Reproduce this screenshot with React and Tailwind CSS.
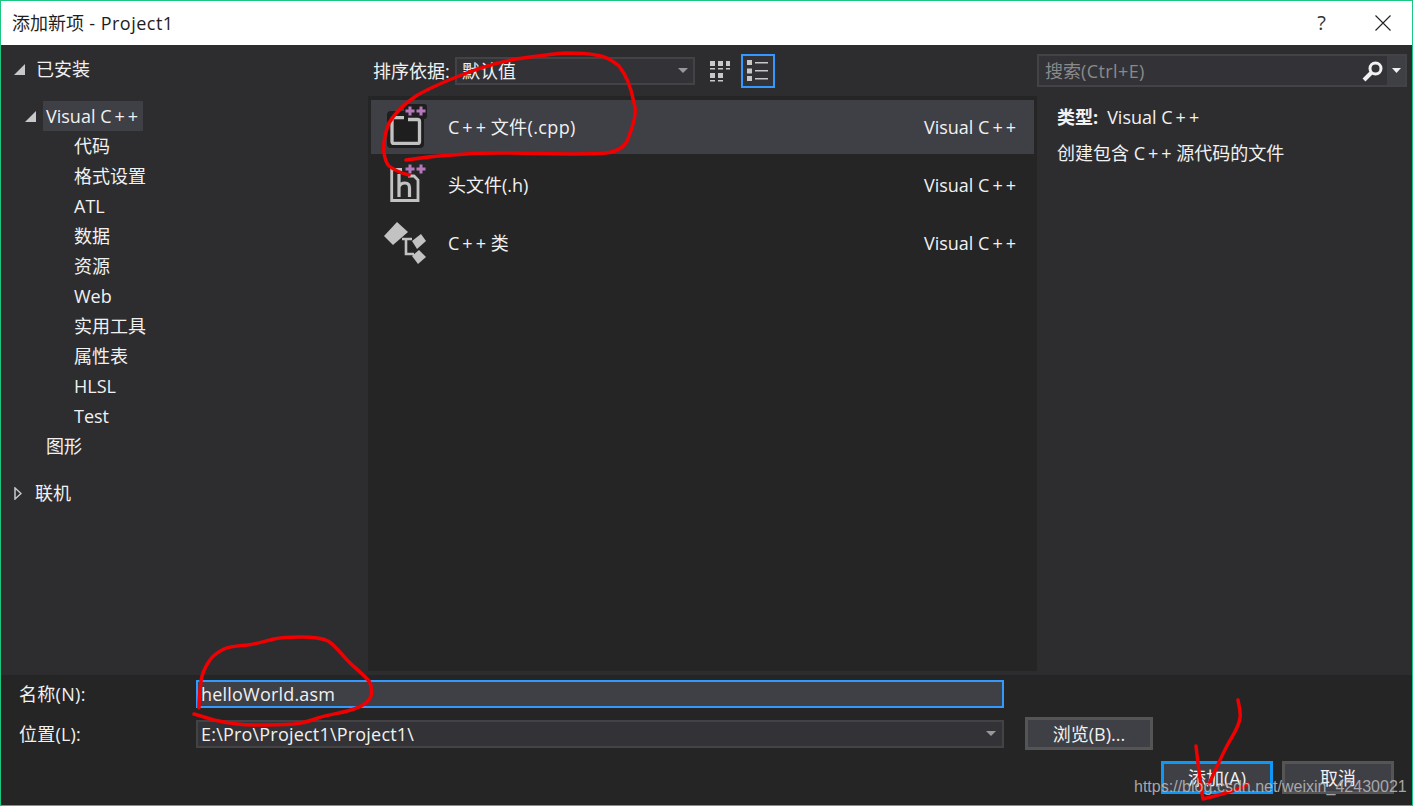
import React from "react";

const FONT = "font-['Open_Sans','Noto_Sans_CJK_SC',sans-serif]";

const TREE_CHILDREN = ["代码", "格式设置", "ATL", "数据", "资源", "Web", "实用工具", "属性表", "HLSL", "Test"];

const Cpp = () => (
  <>
    <span className="tracking-[3px]">C+</span>+
  </>
);

const TEMPLATES = [
  { name: "文件(.cpp)", prefix: true, icon: "cpp", selected: true },
  { name: "头文件(.h)", icon: "header" },
  { name: "类", prefix: true, icon: "class" },
];

const Plus = ({ x, y }) => (
  <path d={`M${x - 1.5} ${y - 4.5}h3v3h3v3h-3v3h-3v-3h-3v-3h3z`} fill="#b579bb" />
);

const CppIcon = () => (
  <svg width="48" height="48" viewBox="0 0 48 48">
    <rect x="0" y="8" width="37" height="37" rx="4" fill="#1e1e1e" />
    <rect x="17" y="1" width="23" height="15" rx="3" fill="#1e1e1e" />
    <path d="M17 14.600H7a2 2 0 0 0-2 2V38.400a2 2 0 0 0 2 2H30.500a2 2 0 0 0 2-2V18.500a2 2 0 0 0-2-2H21" fill="none" stroke="#c2c2c2" strokeWidth="3.300" />
    <Plus x={23} y={8} />
    <Plus x={34} y={8} />
  </svg>
);

const HeaderIcon = () => (
  <svg width="48" height="48" viewBox="0 0 48 48">
    <path d="M15 8.500H4.700V39.500H31V19l-4-4h-6" fill="none" stroke="#c2c2c2" strokeWidth="2.800" />
    <path d="M12 13v23M12 26c1-3 4-4 6-4 3 0 4.500 2 4.500 5v9" fill="none" stroke="#c2c2c2" strokeWidth="3.200" />
    <Plus x={23} y={8} />
    <Plus x={34} y={8} />
  </svg>
);

const ClassIcon = () => (
  <svg width="48" height="48" viewBox="0 0 48 48" className="-ml-[5px]">
    <path d="M2 17L15 3l11 10-15 13z" fill="#c2c2c2" />
    <path d="M30 22l9-7 5 7-9 8z" fill="#c2c2c2" />
    <path d="M30 37l7-6 7 7-8 7z" fill="#c2c2c2" />
    <path d="M20 20h10M24 20v15h8" fill="none" stroke="#c2c2c2" strokeWidth="2.600" />
  </svg>
);

const ICONS = { cpp: CppIcon, header: HeaderIcon, class: ClassIcon };

const Triangle = () => (
  <svg width="11" height="11" viewBox="0 0 11 11">
    <path d="M0 11L11 0v11z" fill="#c8c8c8" />
  </svg>
);

const Caret = () => (
  <svg width="10" height="5" viewBox="0 0 10 5">
    <path d="M0 0h10L5 5z" fill="#999999" />
  </svg>
);

const Button = ({ children, className }) => (
  <div className={`flex items-center justify-center bg-[#3f3f46] border-[3px] text-[18px] text-[#f1f1f1] ${className}`}>
    {children}
  </div>
);

// hand drawn red marks on top of the dialog
const Annotations = () => (
  <svg className="absolute inset-0 pointer-events-none" width="1413" height="806" viewBox="0 0 1413 806" fill="none">
    <path
      d="M405 159C425 156 445 154 465 153C510 150 570 155 605 152C620 150 626 143 628 135C634 120 636 110 633 102C630 85 626 75 618 65C610 58 603 55 595 54C585 52 575 52 565 52C550 53 530 56 515 58C495 62 475 68 458 75C443 81 428 87 415 95C403 103 394 112 388 122C384 132 382 142 383 152C384 158 385 162 388 165C393 169 400 172 408 174"
      stroke="#f00000"
      strokeWidth="3.500"
      strokeLinecap="round"
    />
    <path
      d="M193 713C200 715 206 717 213 719C226 722 240 724 253 724C267 724 280 724 293 723C302 722 309 720 317 717C329 713 342 712 353 708C362 705 368 701 370 695C371 690 371 685 368 680C362 673 354 667 347 660C340 653 335 645 327 640C319 636 309 636 300 636C291 636 282 636 273 638C264 640 256 643 247 644C238 645 230 645 223 648C215 652 210 656 207 662C203 668 201 674 200 680C199 689 198 698 198 707"
      stroke="#f00000"
      strokeWidth="3.500"
      strokeLinecap="round"
    />
    <path
      d="M1237 699C1238 705 1240 711 1239 717C1238 726 1232 734 1227 743C1220 756 1214 770 1208 783"
      stroke="#f00000"
      strokeWidth="3.500"
      strokeLinecap="round"
    />
    <path d="M1195 745C1197 762 1199 780 1202 798C1217 794 1234 791 1247 783" stroke="#f00000" strokeWidth="3.500" strokeLinecap="round" strokeLinejoin="round" />
  </svg>
);

export default function App() {
  return (
    <div className={`relative w-[1413px] h-[806px] overflow-hidden flex flex-col border border-[#1bc77e] bg-[#2d2d30] leading-none ${FONT}`}>
      {/* Title bar */}
      <div className="h-[44px] shrink-0 bg-white flex items-center justify-between pl-[11px] pr-[21px] text-[18px] text-[#1e1e1e]">
        <span>
          添加新项<span className="tracking-[0.5px]"> - Project1</span>
        </span>
        <div className="flex items-center gap-[49px]">
          <span className="text-[20px] text-[#333333]">?</span>
          <svg width="16" height="16" viewBox="0 0 16 16">
            <path d="M.5.5l15 15M15.500.5l-15 15" stroke="#222222" strokeWidth="1.100" fill="none" />
          </svg>
        </div>
      </div>

      {/* Main */}
      <div className="h-[630px] shrink-0 flex">
        {/* Tree */}
        <div className="w-[367px] shrink-0 text-[18px] text-[#f1f1f1]">
          <div className="h-[30px] mt-[9px] flex items-center pl-[13px]">
            <Triangle />
            <span className="ml-[11px]">已安装</span>
          </div>
          <div className="h-[30px] mt-[17px] flex items-center pl-[24px]">
            <Triangle />
            <span className="ml-[7px] h-[30px] px-[3px] w-[100px] flex items-center bg-[#3f3f46]">
              <span>
                Visual <Cpp />
              </span>
            </span>
          </div>
          {TREE_CHILDREN.map(item => (
            <div key={item} className="h-[30px] flex items-center pl-[73px]">{item}</div>
          ))}
          <div className="h-[30px] flex items-center pl-[45px]">图形</div>
          <div className="h-[30px] mt-[17px] flex items-center pl-[13px]">
            <svg width="8" height="13" viewBox="0 0 8 13">
              <path d="M1 1l6 5.500L1 12z" fill="none" stroke="#c8c8c8" strokeWidth="1.500" />
            </svg>
            <span className="ml-[13px]">联机</span>
          </div>
        </div>

        {/* Templates */}
        <div className="w-[669px] shrink-0 flex flex-col">
          <div className="h-[51px] shrink-0 flex items-center text-[18px] text-[#f1f1f1] pl-[5px]">
            <span className="w-[82px]">排序依据:</span>
            <div className="w-[240px] h-[28px] flex items-center justify-between px-[5px] bg-[#333337] border-2 border-[#434346]">
              <span>默认值</span>
              <Caret />
            </div>
            <svg width="22" height="22" viewBox="0 0 22 22" fill="#c8c8c8" className="ml-[14px]">
              <path d="M1 1h5v5H1zM9 1h5v5H9zM17 1h4v5h-4zM1 8h5v1.500H1zM9 8h5v1.500H9zM17 8h4v1.500h-4zM1 13h5v5H1zM9 13h5v5H9zM1 20h5v1.500H1zM9 20h5v1.500H9z" />
            </svg>
            <div className="ml-[10px] w-[34px] h-[34px] flex items-center justify-center bg-[#333337] border-2 border-[#3399ff]">
              <svg width="22" height="22" viewBox="0 0 22 22" fill="#c8c8c8">
                <path d="M0 0h5v5H0zM8 2h13v1.500H8zM0 8.500h5v5H0zM8 10h13v1.500H8zM0 16h5v5H0zM8 18h13v1.500H8z" />
              </svg>
            </div>
          </div>
          <div className="h-[575px] shrink-0 flex flex-col gap-[4px] bg-[#252526] py-[4px] px-[3px] text-[18px] text-[#f1f1f1]">
            {TEMPLATES.map(t => {
              const Icon = ICONS[t.icon];
              return (
                <div key={t.name} className={`h-[54px] flex items-center pl-[16px] pr-[18px] ${t.selected ? "bg-[#3f3f46]" : ""}`}>
                  <div className="w-[61px] flex">
                    <Icon />
                  </div>
                  <span className="flex-1">
                    {t.prefix && (
                      <>
                        <Cpp />{" "}
                      </>
                    )}
                    <span className={t.selected ? "tracking-[0.4px]" : ""}>{t.name}</span>
                  </span>
                  <span>
                    Visual <Cpp />
                  </span>
                </div>
              );
            })}
          </div>
        </div>

        {/* Search and details */}
        <div className="flex-1 text-[18px] text-[#f1f1f1]">
          <div className="h-[51px] flex items-center pr-[5px]">
            <div className="w-full h-[33px] flex items-center bg-[#333337] border-2 border-[#434346]">
              <span className="flex-1 pl-[6px] text-[#8a8a8a]">
                搜索<span className="tracking-[0.4px]">(Ctrl+E)</span>
              </span>
              <svg width="22" height="22" viewBox="0 0 22 22" className="mr-[3px]">
                <circle cx="13.500" cy="8.500" r="5.500" fill="none" stroke="#f1f1f1" strokeWidth="3" />
                <path d="M9 13l-7 7" stroke="#f1f1f1" strokeWidth="4" />
              </svg>
              <div className="w-[18px] h-full flex items-center justify-center bg-[#3f3f46]">
                <svg width="9" height="5" viewBox="0 0 9 5">
                  <path d="M0 0h9L4.500 5z" fill="#f1f1f1" />
                </svg>
              </div>
            </div>
          </div>
          <div className="pl-[20px] pt-[12px]">
            <div className="h-[18px] flex items-center">
              <span className="font-bold">类型:</span>
              <span className="ml-[9px]">
                Visual <Cpp />
              </span>
            </div>
            <div className="h-[18px] mt-[18px] flex items-center">
              <span>
                创建包含 <Cpp /> 源代码的文件
              </span>
            </div>
          </div>
        </div>
      </div>

      {/* Bottom form */}
      <div className="flex-1 bg-[#252526] text-[18px] text-[#f1f1f1] px-[18px] pt-[5px] flex flex-col">
        <div className="flex items-center">
          <span className="w-[177px] tracking-[0.3px]">名称(N):</span>
          <div className="w-[808px] h-[28px] flex items-center px-[3px] bg-[#3f3f46] border-2 border-[#3399ff] tracking-[0.2px]">helloWorld.asm</div>
        </div>
        <div className="flex items-center mt-[9px]">
          <span className="w-[177px] tracking-[0.2px]">位置(L):</span>
          <div className="w-[808px] h-[28px] flex items-center justify-between pl-[3px] pr-[6px] bg-[#333337] border-2 border-[#434346]">
            <span className="tracking-[0.2px]">E:\Pro\Project1\Project1\</span>
            <Caret />
          </div>
          <Button className="ml-[21px] w-[128px] h-[33px] border-[#555555]">浏览(B)...</Button>
        </div>
        <div className="flex justify-end gap-[9px] mt-[11px]">
          <Button className="w-[112px] h-[33px] border-[#0e97f5]">添加(A)</Button>
          <Button className="w-[112px] h-[33px] border-[#555555]">取消</Button>
        </div>
      </div>

      <Annotations />

      {/* Blog watermark */}
      <span className="absolute left-[1133px] top-[777px] text-[16.050px] text-[#b4b4b4] opacity-90 font-['Liberation_Sans',sans-serif] whitespace-nowrap">
        https://blog.csdn.net/weixin_42430021
      </span>
    </div>
  );
}
